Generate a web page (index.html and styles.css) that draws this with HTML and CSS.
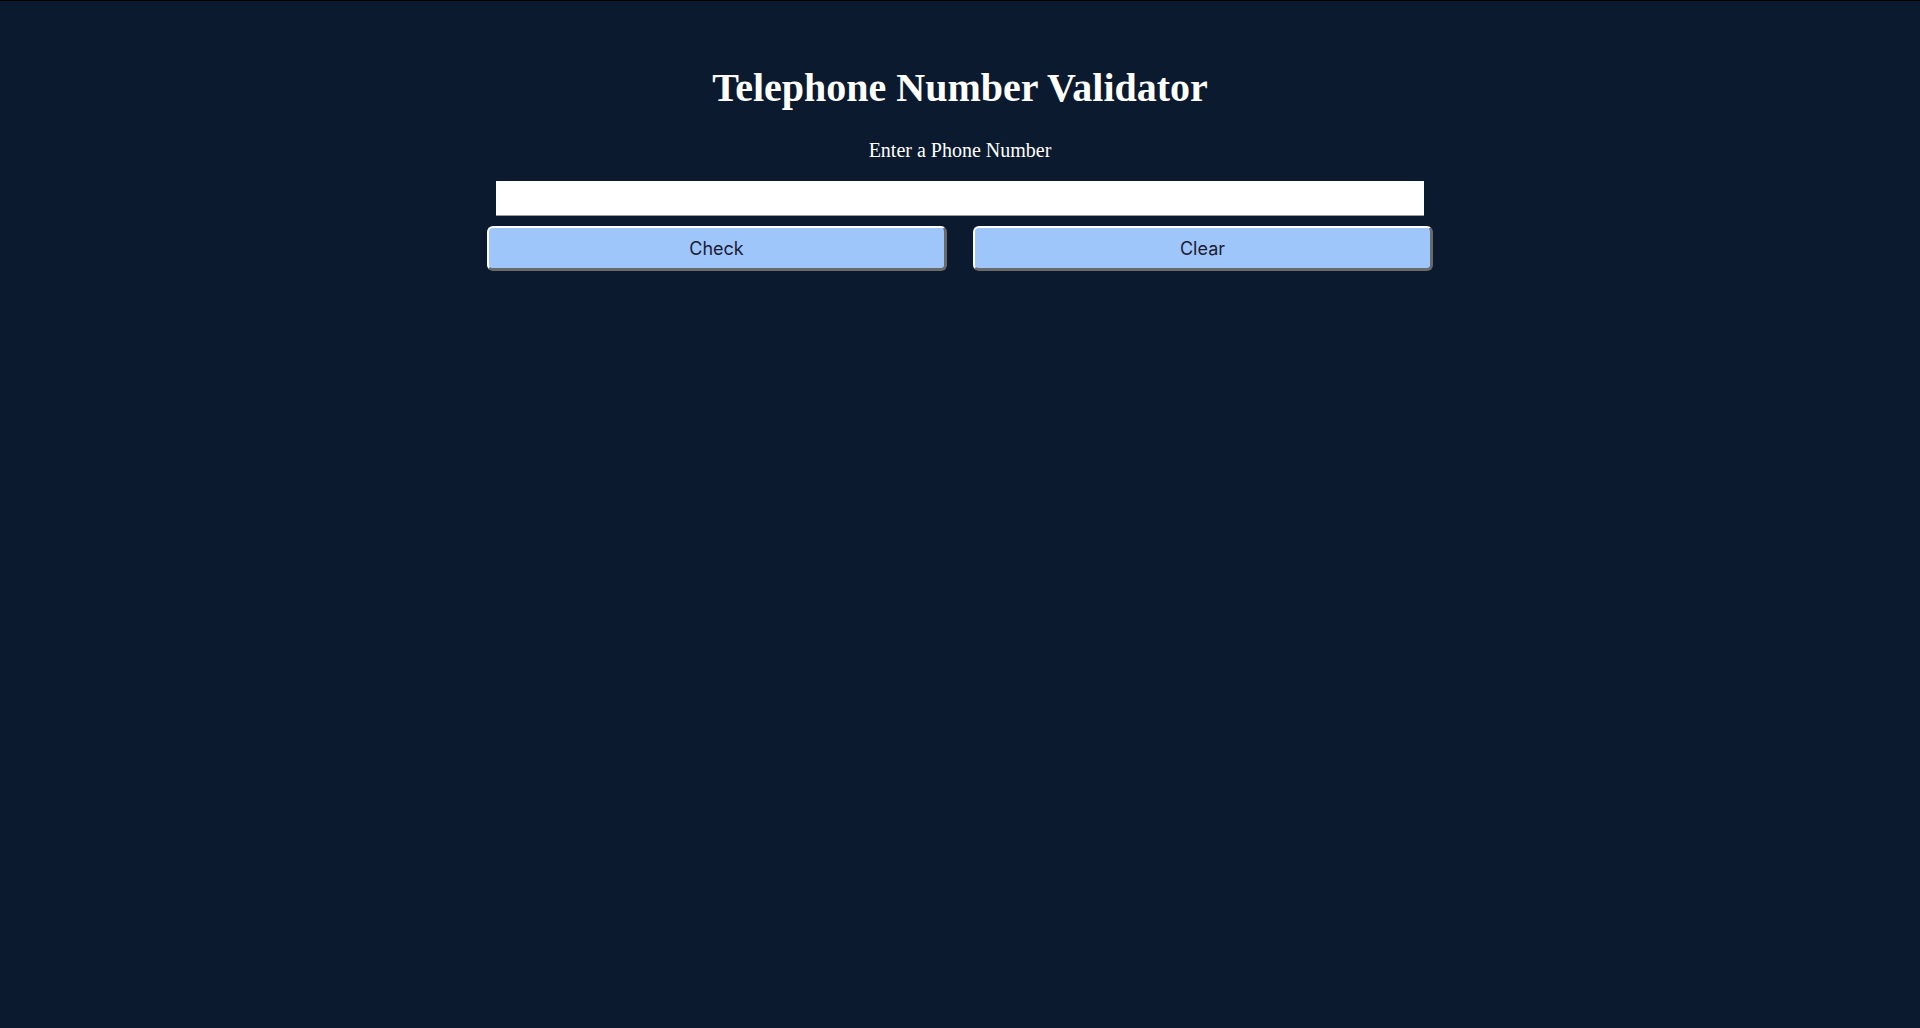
FILE: index.html
```html
<!DOCTYPE html>
<html lang="en">
<head>
<meta charset="UTF-8">
<title>Telephone Number Validator</title>
<link rel="stylesheet" href="styles.css">
</head>
<body>
  <main class="app">
    <h1 class="title">Telephone Number Validator</h1>
    <label class="label" for="user-input">Enter a Phone Number</label>
    <input class="phone-input" id="user-input" type="text">
    <div class="actions">
      <button class="btn" id="check-btn">Check</button>
      <button class="btn" id="clear-btn">Clear</button>
    </div>
  </main>
</body>
</html>
```
FILE: styles.css
```css
html, body {
  margin: 0;
  padding: 0;
  height: 100%;
}
body {
  background: #0b1a2e;
  border-top: 1px solid #000;
  box-sizing: border-box;
  color: #fff;
  font-family: "Liberation Serif", "Times New Roman", serif;
}
.app {
  width: 946px;
  margin: 0 auto;
  padding-top: 65px;
  display: flex;
  flex-direction: column;
  align-items: center;
}
.title {
  margin: 0;
  font-size: 40px;
  font-weight: bold;
  line-height: 44px;
}
.label {
  margin-top: 29px;
  font-size: 20px;
  line-height: 22px;
}
.phone-input {
  margin-top: 20px;
  width: 928px;
  height: 35px;
  box-sizing: border-box;
  border: none;
  border-bottom: 1px solid #9a9a9a;
  background: #fff;
  padding: 0 6px;
  font-size: 18px;
}
.actions {
  margin-top: 10px;
  width: 100%;
  display: grid;
  grid-template-columns: 1fr 1fr;
  gap: 26px;
}
.btn {
  height: 45px;
  box-sizing: border-box;
  background: #9fc6fb;
  color: #1b1b32;
  border-style: solid;
  border-width: 2px 3px 3px 2px;
  border-color: #ffffff #6a6a6a #6a6a6a #ffffff;
  border-radius: 6px;
  font-family: Inter, "Liberation Sans", sans-serif;
  font-size: 18px;
  cursor: pointer;
}
```
